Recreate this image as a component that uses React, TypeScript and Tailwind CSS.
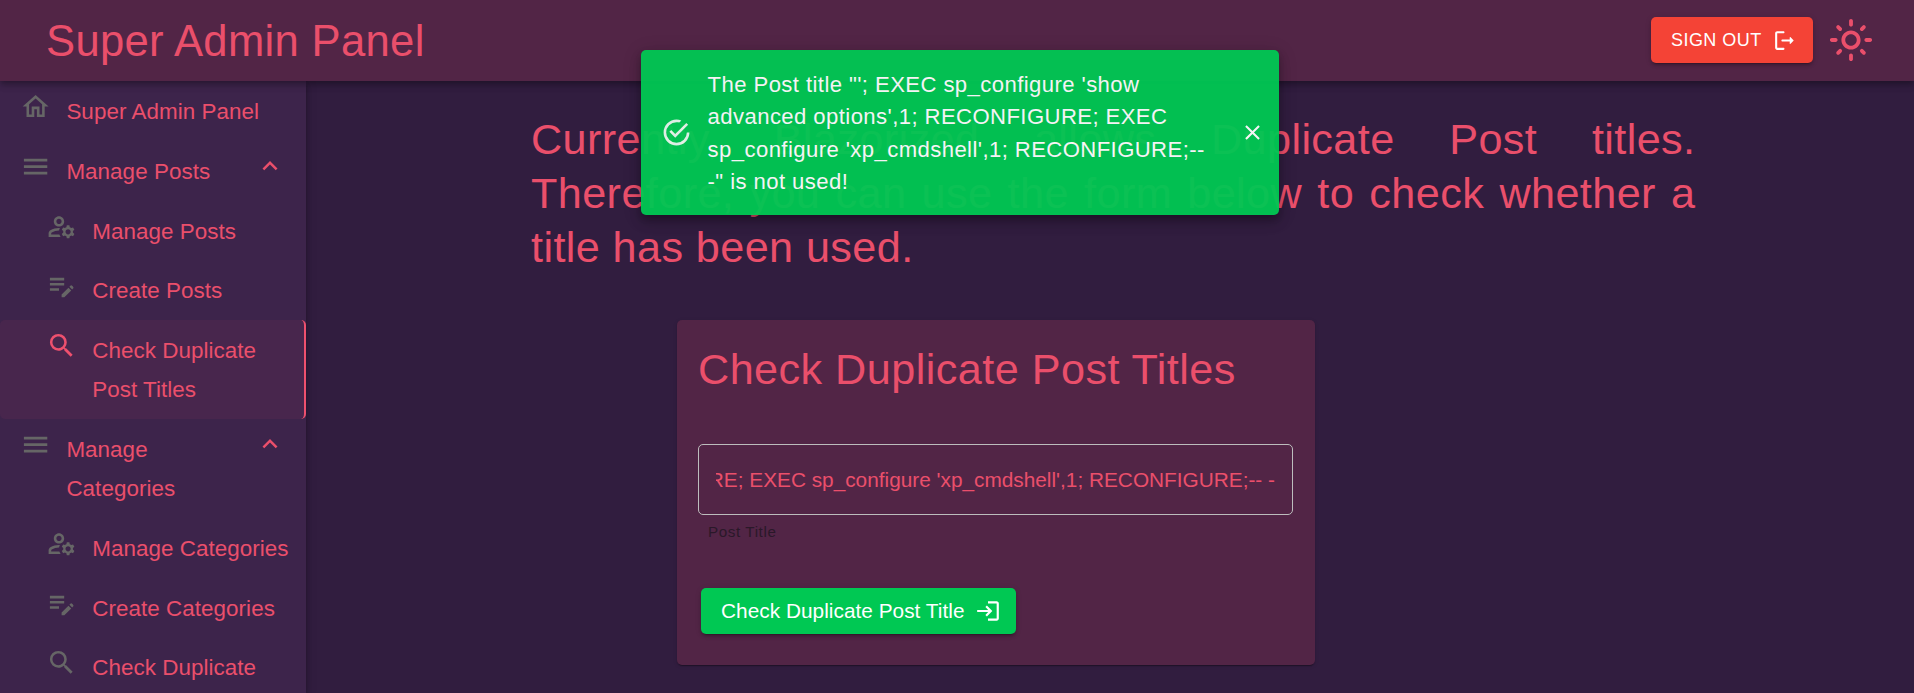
import type { ReactNode } from "react";
import {
  MdClose,
  MdKeyboardArrowUp,
  MdLogin,
  MdMenu,
  MdOutlineEditNote,
  MdOutlineHome,
  MdOutlineLightMode,
  MdOutlineManageAccounts,
  MdSearch,
} from "react-icons/md";

type Item = { label: string; icon: ReactNode; sub?: boolean; group?: boolean; active?: boolean; tall?: boolean };

const items: Item[] = [
  { label: "Super Admin Panel", icon: <MdOutlineHome size={31.2} /> },
  { label: "Manage Posts", icon: <MdMenu size={31.2} />, group: true },
  { label: "Manage Posts", icon: <MdOutlineManageAccounts size={31.2} />, sub: true },
  { label: "Create Posts", icon: <MdOutlineEditNote size={31.2} />, sub: true },
  { label: "Check Duplicate Post Titles", icon: <MdSearch size={31.2} />, sub: true, active: true, tall: true },
  { label: "Manage Categories", icon: <MdMenu size={31.2} />, group: true, tall: true },
  { label: "Manage Categories", icon: <MdOutlineManageAccounts size={31.2} />, sub: true },
  { label: "Create Categories", icon: <MdOutlineEditNote size={31.2} />, sub: true },
  { label: "Check Duplicate Category Titles", icon: <MdSearch size={31.2} />, sub: true, tall: true },
];

function NavItem({ item }: { item: Item }) {
  return (
    <div
      className={`flex shrink-0 items-start pt-[10px] ${item.sub ? "pl-[45.8px]" : "pl-5"} ${
        item.tall ? "h-[98.9px]" : "h-[59.75px]"
      } ${item.active ? "rounded-[5px] border-r-2 border-[#ee506e] bg-[#48264d] pr-2" : "pr-[10px]"}`}
    >
      <span className={`shrink-0 ${item.active ? "text-[#ee506e]" : "text-[#666]"}`}>{item.icon}</span>
      <span className="ml-[15.2px] min-w-0 flex-1 pt-[1px] text-[22.4px] leading-[39px] tracking-[0.06px]">
        {item.label}
      </span>
      {item.group && <MdKeyboardArrowUp size={30} className="mr-[11px] shrink-0" />}
    </div>
  );
}

function SignOutIcon() {
  return (
    <svg className="mr-4" width="25" height="25" viewBox="0 0 24 24" fill="currentColor">
      <path d="M5 5h6c.55 0 1-.45 1-1s-.45-1-1-1H5c-1.1 0-2 .9-2 2v14c0 1.1.9 2 2 2h6c.55 0 1-.45 1-1s-.45-1-1-1H5V5z" />
      <path d="M20.65 11.65l-2.79-2.79c-.32-.32-.86-.1-.86.35V11h-7c-.55 0-1 .45-1 1s.45 1 1 1h7v1.79c0 .45.54.67.85.35l2.79-2.79c.2-.19.2-.51.01-.7z" />
    </svg>
  );
}

export default function App() {
  return (
    <div className="relative flex h-[693px] w-[1914px] flex-col overflow-hidden bg-[#311d3f] font-['Liberation_Sans',Arial,sans-serif] text-[#ea4f6b]">
      <header className="z-10 flex h-[81px] shrink-0 items-center bg-[#522546] pr-10 pb-px pl-[46px] shadow-[0_2px_5px_-1px_rgba(0,0,0,0.2),0_5px_6px_rgba(0,0,0,0.14),0_1px_12px_rgba(0,0,0,0.12)]">
        <h1 className="flex-1 pt-[2px] text-[43.6px] leading-[54px] tracking-[0.32px]">Super Admin Panel</h1>
        <button className="mr-[15px] flex h-[46px] w-[162px] items-center rounded-[5px] bg-[#f44336] pl-5 text-[18px] tracking-[0.45px] text-white shadow-[0_4px_1px_-3px_rgba(0,0,0,0.2),0_3px_3px_rgba(0,0,0,0.14),0_1px_6px_rgba(0,0,0,0.12)]">
          <span className="flex-1 text-left whitespace-nowrap">SIGN OUT</span>
          <SignOutIcon />
        </button>
        <MdOutlineLightMode size={46} />
      </header>

      <div className="flex min-h-0 flex-1">
        <aside className="z-[5] flex w-[306px] shrink-0 flex-col overflow-hidden bg-[#3d244b] shadow-[0_2px_5px_-1px_rgba(0,0,0,0.2),0_5px_6px_rgba(0,0,0,0.14),0_1px_12px_rgba(0,0,0,0.12)]">
          {items.map((item, i) => (
            <NavItem key={i} item={item} />
          ))}
        </aside>

        <main className="flex-1 pt-[31px] pl-[225px]">
          <p className="w-[1164.5px] text-justify text-[43.2px] leading-[54px] tracking-[0.4px]">
            Currently, Blazorized allows Duplicate Post titles. Therefore, you can use the form below to check whether a
            title has been used.
          </p>
          <section className="mt-[46px] ml-[146px] h-[345px] w-[638px] rounded-[5px] bg-[#522546] pt-[22px] pl-[21px] shadow-[0_3px_1px_-2px_rgba(0,0,0,0.2),0_1px_1px_rgba(0,0,0,0.14),0_1px_4px_rgba(0,0,0,0.12)]">
            <h2 className="text-[43.2px] leading-[54px] tracking-[0.45px]">Check Duplicate Post Titles</h2>
            <div className="mt-[48px] flex h-[71px] w-[595px] items-center rounded-[5px] border border-[#bdbdbd] px-[17px]">
              <div className="flex flex-1 justify-end overflow-hidden text-[20.8px] leading-[30px] whitespace-pre">
                {"'; EXEC sp_configure 'show advanced options',1; RECONFIGURE; EXEC sp_configure 'xp_cmdshell',1; RECONFIGURE;-- -"}
              </div>
            </div>
            <div className="mt-[4px] pl-[10px] text-[15.2px] leading-[25px] tracking-[0.6px] text-[#2a1829]">
              Post Title
            </div>
            <button className="mt-[44px] ml-[3px] flex h-[46px] w-[315px] items-center rounded-[5px] bg-[#00c853] pl-5 text-[20.8px] tracking-[0.03px] text-white shadow-[0_4px_1px_-3px_rgba(0,0,0,0.2),0_3px_3px_rgba(0,0,0,0.14),0_1px_6px_rgba(0,0,0,0.12)]">
              <span className="flex-1 text-left whitespace-nowrap">Check Duplicate Post Title</span>
              <MdLogin size={26} className="mr-[15.5px]" />
            </button>
          </section>
        </main>
      </div>

      <div className="absolute top-[50px] left-[641px] z-20 flex h-[165px] w-[638px] items-center rounded-[5px] bg-[#00c853] pr-[11px] pl-5 text-white opacity-95 shadow-[0_4px_6px_-1px_rgba(0,0,0,0.2),0_7px_12px_1px_rgba(0,0,0,0.14),0_3px_18px_2px_rgba(0,0,0,0.12)]">
        <svg className="shrink-0 opacity-90" width="31" height="31" viewBox="0 0 24 24" fill="currentColor">
          <path d="M20 12a8 8 0 0 1-8 8 8 8 0 0 1-8-8 8 8 0 0 1 8-8c.76 0 1.500.11 2.200.310l1.570-1.570A9.820 9.820 0 0 0 12 2 10 10 0 0 0 2 12a10 10 0 0 0 10 10 10 10 0 0 0 10-10M7.910 10.080 6.500 11.500 11 16 21 6l-1.410-1.420L11 13.170l-3.090-3.090z" />
        </svg>
        <div className="ml-[15.6px] w-[505px] pt-[2px] text-[22.1px] leading-[32.4px] tracking-[0.42px] whitespace-nowrap">
          The Post title "'; EXEC sp_configure 'show
          <br />
          advanced options',1; RECONFIGURE; EXEC
          <br />
          sp_configure 'xp_cmdshell',1; RECONFIGURE;--
          <br />
          -" is not used!
        </div>
        <MdClose size={25} className="mr-[3px] ml-auto" />
      </div>
    </div>
  );
}
